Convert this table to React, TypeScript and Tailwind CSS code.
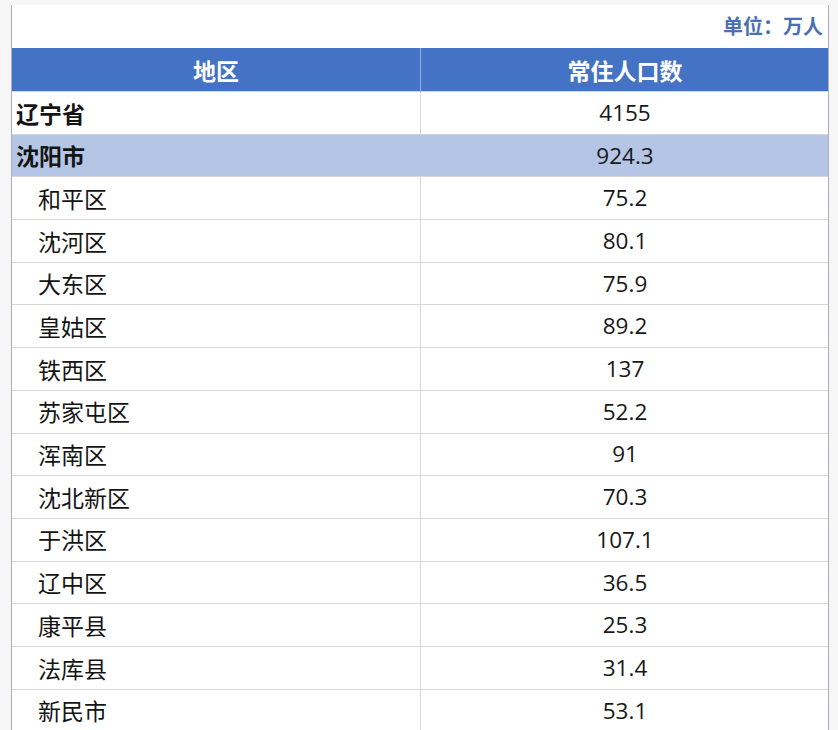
const districts: [string, string][] = [
  ['和平区', '75.2'],
  ['沈河区', '80.1'],
  ['大东区', '75.9'],
  ['皇姑区', '89.2'],
  ['铁西区', '137'],
  ['苏家屯区', '52.2'],
  ['浑南区', '91'],
  ['沈北新区', '70.3'],
  ['于洪区', '107.1'],
  ['辽中区', '36.5'],
  ['康平县', '25.3'],
  ['法库县', '31.4'],
  ['新民市', '53.1'],
]

const cjk = { fontFamily: '"Noto Sans CJK SC", "Noto Sans", sans-serif' }
const num = { fontFamily: '"Open Sans", "Noto Sans", sans-serif' }

function Row({ name, value, bold, tint }: { name: string; value: string; bold?: boolean; tint?: boolean }) {
  return (
    <div
      className={`grid grid-cols-[408px_409px] h-[42.7px] border-t border-[#d4d6da] ${tint ? 'bg-[#b4c5e6]' : 'bg-white'}`}
    >
      <div
        className={`flex items-center text-[23px] text-[#141414] ${bold ? 'font-bold pl-[4px]' : 'pl-[26px]'}`}
        style={cjk}
      >
        {name}
      </div>
      <div
        className={`flex items-center justify-center border-l text-[22.5px] text-[#181818] ${tint ? 'border-[#b4c5e6]' : 'border-[#d4d6da]'}`}
        style={num}
      >
        {value}
      </div>
    </div>
  )
}

export default function App() {
  return (
    <div className="min-h-[730px] h-[730px] overflow-hidden bg-[#f6f6f6] pt-[5px] pl-[11px]">
      <div className="w-[818px] bg-white border-l border-r border-[#a9afba]">
        {/* 单位 */}
        <div className="h-[43px] flex items-center justify-end pr-[5px] pb-[2px]">
          <span className="text-[20px] font-bold text-[#4b6fb3]" style={cjk}>
            单位：万人
          </span>
        </div>

        {/* 表头 */}
        <div className="grid grid-cols-[408px_409px] h-[44px] bg-[#4472c4] text-white">
          <div className="flex items-center justify-center text-[23px] font-bold" style={cjk}>
            地区
          </div>
          <div
            className="flex items-center justify-center text-[23px] font-bold border-l border-[#8fb0e8]"
            style={cjk}
          >
            常住人口数
          </div>
        </div>

        <div className="-mt-px">
          <Row name="辽宁省" value="4155" bold />
          <Row name="沈阳市" value="924.3" bold tint />
          {districts.map(([n, v]) => (
            <Row key={n} name={n} value={v} />
          ))}
        </div>
      </div>
    </div>
  )
}
